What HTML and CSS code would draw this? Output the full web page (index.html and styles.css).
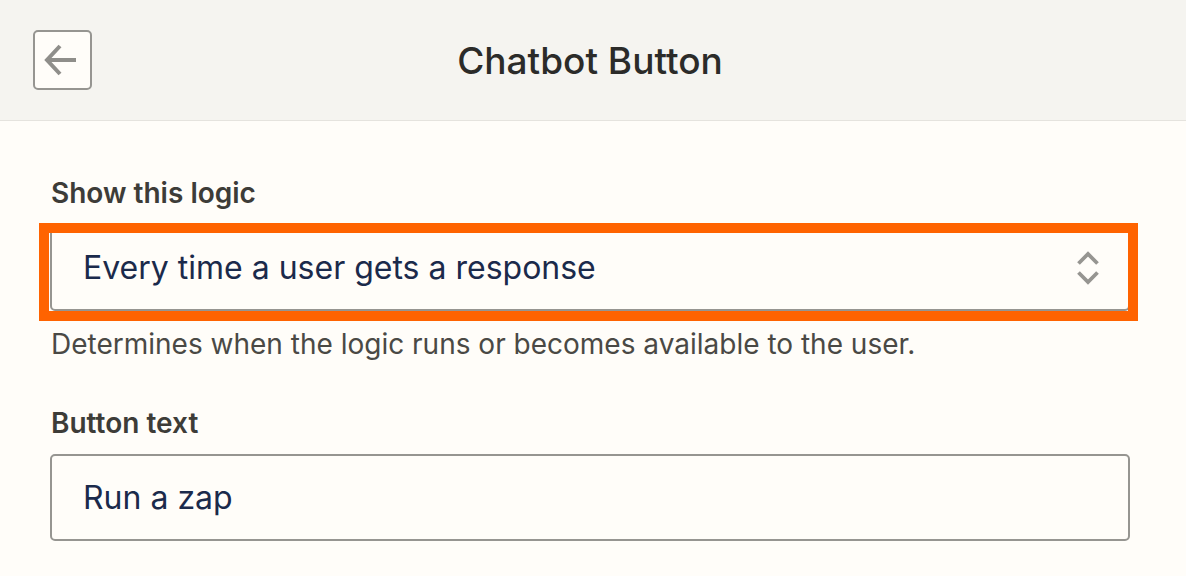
FILE: index.html
```html
<!DOCTYPE html>
<html>
<head>
<meta charset="utf-8">
<link rel="stylesheet" href="styles.css">
</head>
<body>
<div class="header">
  <button class="back" aria-label="Back">
    <svg width="36" height="32" viewBox="0 0 36 32"><path d="M33 16H4M17 2L4 16l13 14" fill="none" stroke="#8f8e8a" stroke-width="4" stroke-linejoin="miter"/></svg>
  </button>
  <div class="title">Chatbot Button</div>
  <div class="spacer"></div>
</div>
<div class="content">
  <div class="field">
    <div class="label">Show this logic</div>
    <div class="select-wrap">
      <div class="select">
        <span>Every time a user gets a response</span>
        <svg class="chev" width="24" height="36" viewBox="0 0 24 36"><path d="M2.5 13.5L12 4l9.5 9.5M2.5 22.5L12 32l9.5-9.5" fill="none" stroke="#969591" stroke-width="3.8"/></svg>
      </div>
      <div class="highlight"></div>
    </div>
    <div class="help">Determines when the logic runs or becomes available to the user.</div>
  </div>
  <div class="field second">
    <div class="label">Button text</div>
    <div class="input">Run a zap</div>
  </div>
</div>
</body>
</html>
```
FILE: styles.css
```css
html, body {
  margin: 0;
  padding: 0;
  background: #fffdf9;
  font-family: "Inter", "Liberation Sans", sans-serif;
}
.header {
  height: 120px;
  background: #f5f4f0;
  border-bottom: 1px solid #e5e3de;
  display: flex;
  align-items: center;
  padding: 0 33px;
  box-sizing: content-box;
}
.back {
  width: 59px;
  height: 60px;
  border: 2px solid #969591;
  border-radius: 5px;
  background: #fffdf9;
  display: flex;
  align-items: center;
  justify-content: center;
  padding: 0 4px 0 0;
  flex: none;
}
.title {
  flex: 1;
  text-align: center;
  font-size: 37px;
  font-weight: 500;
  color: #2b2b29;
  margin-right: 6px;
}
.spacer { width: 59px; flex: none; }
.content {
  padding: 54px 56px 0 50px;
}
.label {
  font-size: 28px;
  line-height: 36px;
  font-weight: 600;
  color: #3d3c38;
  padding-left: 1px;
}
.select-wrap {
  position: relative;
  margin-top: 13px;
}
.select, .input {
  height: 87px;
  box-sizing: border-box;
  border: 2px solid #969591;
  border-radius: 5px;
  background: #fffdf9;
  display: flex;
  align-items: center;
  justify-content: space-between;
  padding: 0 28px 0 31px;
  font-size: 32px;
  color: #1b2a4b;
}
.highlight {
  position: absolute;
  left: -11px;
  top: -1px;
  right: -8px;
  height: 98px;
  border: 10px solid #ff6300;
  box-sizing: border-box;
}
.help {
  margin-top: 15px;
  font-size: 28px;
  line-height: 36px;
  color: #4a4945;
  padding-left: 1px;
}
.second { margin-top: 43px; }
.input { margin-top: 13px; }
```
